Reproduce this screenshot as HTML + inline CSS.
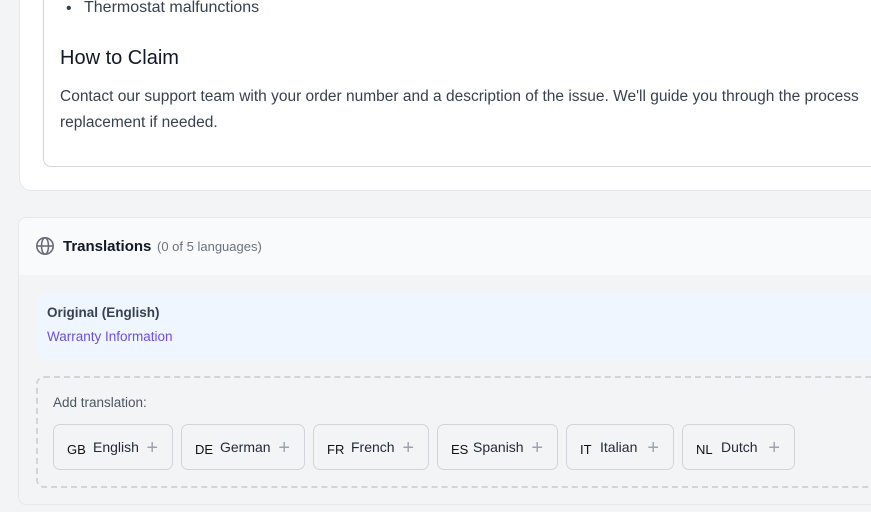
<!DOCTYPE html>
<html><head><style>
*{box-sizing:border-box;margin:0;padding:0}
body{width:871px;height:512px;overflow:hidden;background:#f3f4f6;font-family:"Liberation Sans",sans-serif;position:relative;color:#374151}
.card1{position:absolute;left:19px;top:-20px;width:900px;height:211px;background:#fff;border:1px solid #e5e7eb;border-radius:12px}
.inner{position:absolute;left:43px;top:-20px;width:900px;height:187px;border:1px solid #d1d5db;border-radius:8px}
.t{position:absolute;white-space:nowrap}
.card2{position:absolute;left:18px;top:217px;width:900px;height:288px;background:#f3f4f6;border:1px solid #e5e7eb;border-radius:8px;overflow:hidden}
.hdr{position:absolute;left:0;top:0;right:0;height:57px;background:#f9fafb}
.orig{position:absolute;left:19px;top:76px;width:900px;height:65px;background:#eff6ff;border-radius:6px}
.dash{position:absolute;left:17px;top:158px;width:900px;height:112px;border:2px dashed #d1d5db;border-radius:8px}
.chip{position:absolute;top:424px;height:46px;border:1px solid #d1d5db;border-radius:7px;background:#f3f4f6;font-size:14px;color:#1f2937}
.chip b{position:absolute;left:13px;top:17px;font-size:13px;font-weight:normal;color:#111}
.chip span{position:absolute;top:14px}
.chip i{position:absolute;right:14px;top:12px;font-style:normal;font-size:20px;color:#9ca3af}
</style></head><body>
<div class="card1"></div>
<div class="inner"></div>
<div class="t" style="left:66px;top:2px;font-size:16px;color:#374151"><span style="position:absolute;left:0;top:-2px">•</span><span style="position:absolute;left:18px;top:-3px">Thermostat malfunctions</span></div>
<div class="t" style="left:60px;top:47px;font-size:20px;color:#111827">How to Claim</div>
<div class="t" style="left:60px;top:88px;font-size:15.5px;color:#374151">Contact our support team with your order number and a description of the issue. We'll guide you through the process</div>
<div class="t" style="left:60px;top:114px;font-size:15.5px;color:#374151">replacement if needed.</div>
<div class="card2"><div class="hdr"></div><div class="orig"></div><div class="dash"></div></div>
<svg style="position:absolute;left:35px;top:236px" width="20" height="20" viewBox="0 0 20 20" fill="none" stroke="#6b6b7b" stroke-width="1.6"><circle cx="10" cy="10" r="8.2"/><ellipse cx="10" cy="10" rx="3.5" ry="8.2"/><path d="M2 10h16"/></svg>
<div class="t" style="left:63px;top:238px;font-size:15px;font-weight:bold;color:#111827">Translations</div>
<div class="t" style="left:157px;top:239px;font-size:13px;color:#6b7280">(0 of 5 languages)</div>
<div class="t" style="left:47px;top:305px;font-size:13.5px;font-weight:bold;color:#374151">Original (English)</div>
<div class="t" style="left:47px;top:329px;font-size:13.5px;color:#6d4fe0">Warranty Information</div>
<div class="t" style="left:53px;top:395px;font-size:13.5px;color:#4b5563">Add translation:</div>
<div class="chip" style="left:53px;width:120px"><b>GB</b><span style="left:39px">English</span><i>+</i></div>
<div class="chip" style="left:181px;width:124px"><b>DE</b><span style="left:38px">German</span><i>+</i></div>
<div class="chip" style="left:313px;width:116px"><b>FR</b><span style="left:37px">French</span><i>+</i></div>
<div class="chip" style="left:437px;width:121px"><b>ES</b><span style="left:35px">Spanish</span><i>+</i></div>
<div class="chip" style="left:566px;width:108px"><b>IT</b><span style="left:33px">Italian</span><i>+</i></div>
<div class="chip" style="left:682px;width:113px"><b>NL</b><span style="left:38px">Dutch</span><i>+</i></div>
</body></html>
